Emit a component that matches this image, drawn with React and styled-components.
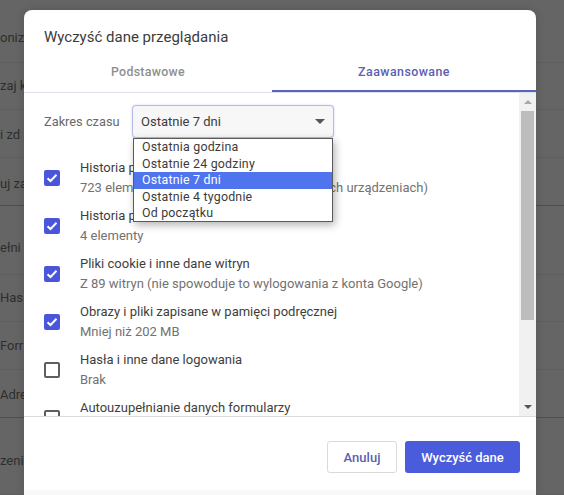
import React from "react";
import styled, { createGlobalStyle } from "styled-components";

const Global = createGlobalStyle`
  html, body { margin: 0; padding: 0; }
  body { width: 564px; height: 495px; overflow: hidden; background: #656565; font-family: Roboto, "Liberation Sans", sans-serif; }
  * { box-sizing: border-box; }
`;
const Page = styled.div`
  width: 564px; height: 495px; position: relative; overflow: hidden; background: #656565;
`;
const BackRows = styled.div`
  display: flex; flex-direction: column; padding-top: 14px;
`;
const BackRow = styled.div`
  height: ${p => p.$h}px; width: 564px; padding-top: ${p => p.$pad}px;
  border-bottom: 1px solid ${p => p.$strong ? "#505050" : "#5f5f5f"};
  font-size: 13px; line-height: 15px; color: #2e2e2e; white-space: nowrap; overflow: hidden;
`;
const Dialog = styled.div`
  position: absolute; left: 24px; top: 10px; width: 512px; height: 485px;
  background: #fff; border-radius: 8px 8px 0 0; display: flex; flex-direction: column;
  box-shadow: 0 0 10px rgba(0,0,0,.15);
`;
const Title = styled.h1`
  margin: 0; padding: 19px 20px 0; height: 49px; font-size: 15px; font-weight: 400; line-height: 17px; color: #3c3c3c;
`;
const Tabs = styled.div`
  display: flex; height: 34px; border-bottom: 1px solid #dde0e8;
`;
const Tab = styled.div`
  flex: 0 0 ${p => p.$active ? 264 : 248}px; text-align: center; font-size: 12.4px; line-height: 26px; font-weight: 500;
  letter-spacing: ${p => p.$active ? ".45px" : ".3px"};
  color: ${p => p.$active ? "#5c5fb0" : "#8f8f8f"};
  height: 33px;
  border-bottom: 2px solid ${p => p.$active ? "#5a64b8" : "transparent"};
`;
const Scroll = styled.div`
  flex: 0 0 324px; position: relative; overflow: hidden; border-bottom: 1px solid #dcdcdc; padding: 0 20px;
`;
const RangeRow = styled.div`
  display: flex; align-items: center; height: 33px; margin-top: 12px; margin-bottom: 15px;
`;
const RangeLabel = styled.span`
  width: 88px; font-size: 12.8px; color: #6a6a6a;
`;
const Select = styled.div`
  width: 202px; height: 33px; border: 1px solid #b4bbe6; border-radius: 4px; background: #f7f7f7;
  display: flex; align-items: center; justify-content: space-between; padding: 0 8px;
  font-size: 13px; color: #3c3c3c; box-shadow: 0 0 2px rgba(90,100,220,.35);
`;
const Caret = styled.span`
  width: 0; height: 0; border-left: 5px solid transparent; border-right: 5px solid transparent; border-top: 5px solid #555;
`;
const Menu = styled.ul`
  position: absolute; left: 109px; top: 45px; width: 200px; height: 84px; margin: 0; padding: 0;
  list-style: none; background: #fff; border: 1px solid #5a5a5a; box-shadow: 2px 3px 8px rgba(0,0,0,.3);
  z-index: 2;
`;
const MenuItem = styled.li`
  height: 16.5px; line-height: 16.5px; padding-left: 8px; font-size: 12.4px; letter-spacing: .2px;
  color: ${p => p.$sel ? "#fff" : "#3c3c3c"}; background: ${p => p.$sel ? "#4f74ee" : "transparent"};
`;
const Item = styled.div`
  display: flex; align-items: center; height: 48px;
`;
const Box = styled.span`
  flex: none; width: 16px; height: 16px; border-radius: 2px; margin: 2px 20px 0 0;
  display: flex; align-items: center; justify-content: center;
  background: ${p => p.$on ? "#4a55dc" : "#fff"};
  border: ${p => p.$on ? "none" : "2px solid #5f5f5f"};
`;
const ItemText = styled.div`
  display: flex; flex-direction: column; gap: 3px;
`;
const ItemTitle = styled.div`
  font-size: 13px; line-height: 17px; color: #3e3e3e; white-space: nowrap;
`;
const ItemSub = styled.div`
  font-size: 13px; line-height: 17px; color: #727272; white-space: nowrap;
`;
const Track = styled.div`
  position: absolute; right: 0; top: 0; bottom: 0; width: 17px; background: #f1f1f1;
  display: flex; flex-direction: column; align-items: center;
`;
const Arrow = styled.span`
  flex: none; width: 0; height: 0; margin: 7px 0 7px;
  border-left: 4px solid transparent; border-right: 4px solid transparent;
  ${p => p.$down ? "border-top: 4px solid #555; margin-top:auto;" : "border-bottom: 4px solid #a8a8a8;"}
`;
const Thumb = styled.div`
  width: 13px; height: 209px; background: #bdbdbd;
`;
const Footer = styled.div`
  flex: 1; display: flex; justify-content: flex-end; align-items: flex-start; gap: 8px; padding: 24px 16px 0;
  background: linear-gradient(#fff 73px, #f8f8f8 73px);
`;
const Button = styled.button`
  height: 32px; border-radius: 3px; font: 500 13px Roboto, sans-serif; padding: 0;
  width: ${p => p.$primary ? 115 : 70}px;
  background: ${p => p.$primary ? "#4a5bdc" : "#fff"};
  color: ${p => p.$primary ? "#fff" : "#5c5fb0"};
  border: ${p => p.$primary ? "none" : "1px solid #dadada"};
`;
const Check = () => (
  <svg width="12" height="10" viewBox="0 0 12 10"><path d="M1.5 5.2 4.5 8 10.5 1.8" fill="none" stroke="#fff" strokeWidth="2" /></svg>
);
const back = [
  ["oniz", 49, 16], ["zaj k", 47, 15], ["i zd", 48, 17], ["uj za", 48, 18, true],
  ["ełni", 69, 34], ["Has", 47, 15], ["Forr", 48, 16], ["Adre", 48, 17, true], ["zeni", 77, 35],
];
const items = [
  [true, "Historia przeglądania", "723 elementy (i więcej na synchronizowanych urządzeniach)"],
  [true, "Historia pobierania", "4 elementy"],
  [true, "Pliki cookie i inne dane witryn", "Z 89 witryn (nie spowoduje to wylogowania z konta Google)"],
  [true, "Obrazy i pliki zapisane w pamięci podręcznej", "Mniej niż 202 MB"],
  [false, "Hasła i inne dane logowania", "Brak"],
  [false, "Autouzupełnianie danych formularzy", "\u00a0"],
];
const options = ["Ostatnia godzina", "Ostatnie 24 godziny", "Ostatnie 7 dni", "Ostatnie 4 tygodnie", "Od początku"];
export default function App() {
  return (
    <Page>
      <Global />
      <BackRows>
        {back.map(([t, h, pad, strong]) => <BackRow key={t} $h={h} $pad={pad} $strong={strong}>{t}</BackRow>)}
      </BackRows>
      <Dialog>
        <Title>Wyczyść dane przeglądania</Title>
        <Tabs><Tab>Podstawowe</Tab><Tab $active>Zaawansowane</Tab></Tabs>
        <Scroll>
          <RangeRow>
            <RangeLabel>Zakres czasu</RangeLabel>
            <Select>Ostatnie 7 dni<Caret /></Select>
          </RangeRow>
          <Menu>{options.map((o, i) => <MenuItem key={o} $sel={i === 2}>{o}</MenuItem>)}</Menu>
          {items.map(([on, t, s]) => (
            <Item key={t}>
              <Box $on={on}>{on && <Check />}</Box>
              <ItemText><ItemTitle>{t}</ItemTitle><ItemSub>{s}</ItemSub></ItemText>
            </Item>
          ))}
          <Track><Arrow /><Thumb /><Arrow $down /></Track>
        </Scroll>
        <Footer><Button>Anuluj</Button><Button $primary>Wyczyść dane</Button></Footer>
      </Dialog>
    </Page>
  );
}
